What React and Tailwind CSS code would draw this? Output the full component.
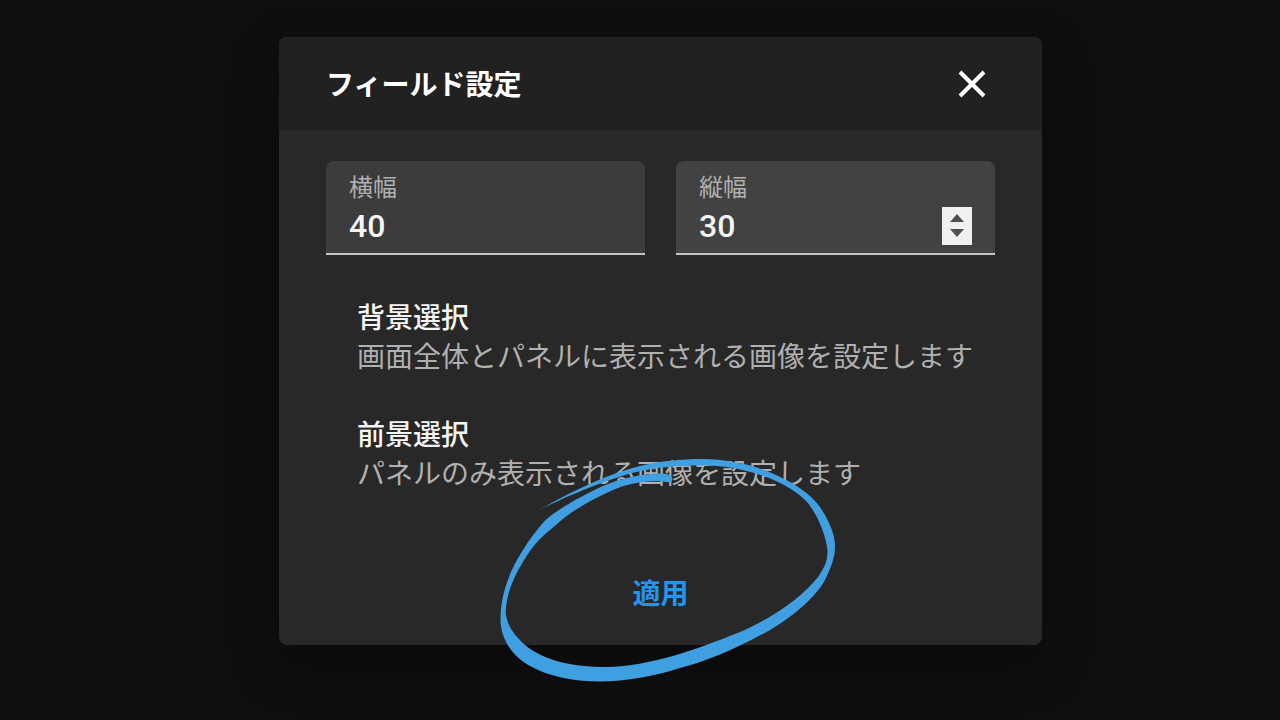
import { useRef } from "react";

const CIRCLE_PATH = [
  "M538 510.5",
  "C562 497 600 476 640 466",
  "C660 461 682 459 702 459",
  "C728 459 755 465 776 475",
  "C794 483 811 494 820 507",
  "L825 515",
  "C832 528 835 537 835 546",
  "C835 558 831 567 826 578",
  "C818 595 794 616 770 630",
  "C738 648 705 662 680 668",
  "C655 676 626 681.5 600 681.5",
  "C572 681.5 548 676 530 666",
  "C512 656 500.5 639 500.5 619",
  "C500.5 597 508 573 523 550",
  "C531 537 537 530 542 524",
  "C551 513 577 498 603 486",
  "C622 478 643 473 663 473.5",
  "C668 474 673 476 672.5 479",
  "C672 483 668 482.5 663 481.5",
  "C645 480 626 484 613 490",
  "C590 500 570 512 556 525",
  "C546 533 538 540 530.7 550",
  "C516 571 506 592 505.7 613",
  "C507 626 515 636 525 645",
  "C543 660 571 667 607 667",
  "C650 666 695 650 740 632",
  "C775 617 803 596 818 577",
  "C825 567 827.5 560 827.5 551",
  "C826 535 818 516 808 503",
  "C788 481 745 466 703 465.3",
  "C672 465.3 645 469 625 475",
  "C606 481 580 490 538 510.5",
  "Z",
].join("");

function HandDrawnCircle() {
  return (
    <svg
      className="pointer-events-none absolute left-[211px] top-[413px] h-[240px] w-[360px]"
      viewBox="490 450 360 240"
      aria-hidden="true"
    >
      <path d={CIRCLE_PATH} fill="#3f9fe0" />
    </svg>
  );
}

function NumberField({ id, label, value, spinner, tone }) {
  const input = useRef(null);
  return (
    <div className={`flex min-w-0 flex-1 flex-col rounded-t-lg border-b-2 border-[#c4c4c4] px-[23px] pt-3 ${tone}`}>
      <label htmlFor={id} className="text-[24px] leading-[30px] text-[#b0b0b0]">
        {label}
      </label>
      <div className="flex h-[50px] items-center pb-1">
        <input
          ref={input}
          id={id}
          type="number"
          defaultValue={value}
          className="h-full min-w-0 flex-1 appearance-none bg-transparent text-[32px] font-medium text-[#f5f5f5] outline-none [-moz-appearance:textfield] [&::-webkit-inner-spin-button]:appearance-none"
        />
        {spinner && (
          <div className="flex h-[38px] w-[30px] flex-col bg-[#f0f0f0]">
            <button
              type="button"
              aria-label="増やす"
              onClick={() => input.current.stepUp()}
              className="flex flex-1 items-end justify-center pb-[3px]"
            >
              <svg className="h-2 w-[14px]" viewBox="0 0 14 8" fill="#505050">
                <path d="M7 0L14 8H0Z" />
              </svg>
            </button>
            <button
              type="button"
              aria-label="減らす"
              onClick={() => input.current.stepDown()}
              className="flex flex-1 items-start justify-center pt-1"
            >
              <svg className="h-2 w-[14px]" viewBox="0 0 14 8" fill="#505050">
                <path d="M0 0H14L7 8Z" />
              </svg>
            </button>
          </div>
        )}
      </div>
    </div>
  );
}

function ListItem({ title, description }) {
  return (
    <button type="button" className="block w-full text-left text-[28px] leading-[39px]">
      <span className="block font-medium text-[#f5f5f5]">{title}</span>
      <span className="block whitespace-nowrap text-[#b0b0b0]">{description}</span>
    </button>
  );
}

export default function App() {
  return (
    <main className="flex min-h-screen items-center justify-center bg-[#0f0f0f] pb-[39px] pl-[41px] font-['Roboto','Noto_Sans_CJK_JP',sans-serif]">
      <section
        role="dialog"
        aria-labelledby="dialog-title"
        className="relative w-full max-w-[763px] rounded-lg bg-[#282828] shadow-[0_20px_48px_4px_rgba(0,0,0,0.3)]"
      >
        <header className="flex h-[93px] items-center justify-between rounded-t-lg bg-[#212121] pl-[47px] pr-[46px]">
          <h1 id="dialog-title" className="pt-1.5 text-[28px] font-bold leading-10 text-white">
            フィールド設定
          </h1>
          <button type="button" aria-label="閉じる" className="flex size-12 items-center justify-center text-white">
            <svg className="size-8" viewBox="0 0 32 32" fill="none" stroke="currentColor" strokeWidth="4">
              <path d="M4 5L28 29M28 5L4 29" />
            </svg>
          </button>
        </header>
        <div className="px-[47px] pb-[14px] pt-[31px]">
          <div className="flex gap-[31px]">
            <NumberField id="field-width" label="横幅" value={40} tone="bg-[#3c3c3c]" />
            <NumberField id="field-height" label="縦幅" value={30} tone="bg-[#424242]" spinner />
          </div>
          <div className="flex flex-col gap-[39px] pl-[31px] pt-11">
            <ListItem title="背景選択" description="画面全体とパネルに表示される画像を設定します" />
            <ListItem title="前景選択" description="パネルのみ表示される画像を設定します" />
          </div>
          <div className="flex justify-center pt-[65px]">
            <button type="button" className="h-[72px] px-8 text-[28px] font-bold text-[#2196f3]">
              適用
            </button>
          </div>
        </div>
        <HandDrawnCircle />
      </section>
    </main>
  );
}
